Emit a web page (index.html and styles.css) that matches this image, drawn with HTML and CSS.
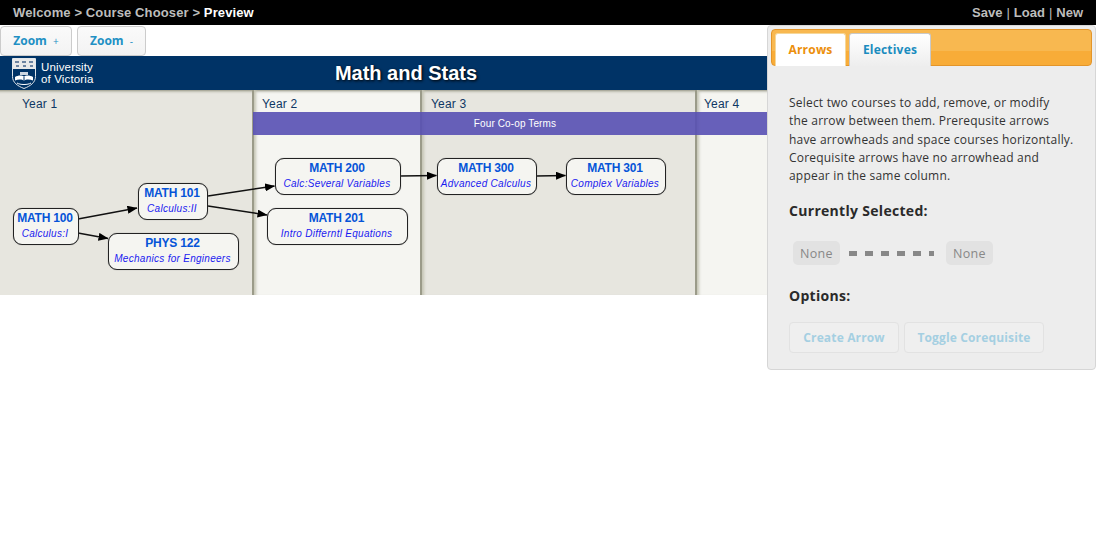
FILE: index.html
```html
<!DOCTYPE html>
<html lang="en">
<head>
<meta charset="utf-8">
<title>Course Chooser Preview</title>
<link rel="stylesheet" href="styles.css">
</head>
<body>
<nav class="topbar">
  <div class="crumbs">Welcome &gt; Course Chooser &gt; <span class="current">Preview</span></div>
  <div class="actions"><span>Save</span><i>|</i><span>Load</span><i>|</i><span>New</span></div>
</nav>
<div class="toolbar">
  <button class="zoom">Zoom <small>+</small></button>
  <button class="zoom">Zoom <small>-</small></button>
</div>
<header class="banner">
  <div class="brand">
    <svg class="crest" width="24" height="31" viewBox="0 0 24 31">
      <path d="M.5.5h23v18c0 6-5 9.500-11.500 12C5.500 28 .5 24.500.5 18.500z" fill="#003366" stroke="#dfe5ea"/>
      <path d="M1 1h22v10H1z" fill="#e8e8e8"/>
      <path d="M3 3h4v2H3zM10 3h4v2h-4zM17 3h4v2h-4zM4 7h3v2H4zM11 7h3v2h-3zM18 7h3v2h-3z" fill="#6c83a0"/>
      <path d="M3 19c3-2 7-2 9-.5 2-1.500 6-1.500 9 .5v3.500c-3-1.500-7-1.500-9 0-2-1.500-6-1.500-9 0z" fill="#fff"/>
      <path d="M12 18.500v4" stroke="#003366"/>
      <path d="M8 14h8v3H8z" fill="#cdd6e0"/>
      <path d="M5 25c3 2 11 2 14 0" stroke="#fff" fill="none"/>
    </svg>
    <div class="wordmark">University<br>of Victoria</div>
  </div>
  <h1>Math and Stats</h1>
</header>
<main class="chart">
  <section class="year y1"><span>Year 1</span></section>
  <section class="year y2"><span>Year 2</span></section>
  <section class="year y3"><span>Year 3</span></section>
  <section class="year y4"><span>Year 4</span></section>
  <div class="coop">Four Co-op Terms</div>
  <svg class="arrows" width="767" height="205" viewBox="0 90 767 205">
    <defs>
      <marker id="head" markerUnits="userSpaceOnUse" markerWidth="10" markerHeight="8" refX="9.500" refY="4" orient="auto">
        <path d="M0 0l10 4-10 4z" fill="#000"/>
      </marker>
    </defs>
    <g stroke="#111" stroke-width="1.400" marker-end="url(#head)">
      <line x1="78" y1="219" x2="137" y2="208"/>
      <line x1="78" y1="233" x2="108" y2="238.500"/>
      <line x1="208" y1="196" x2="274.500" y2="186"/>
      <line x1="208" y1="206" x2="267" y2="215"/>
      <line x1="400" y1="176" x2="436.500" y2="175.500"/>
      <line x1="536" y1="176" x2="565.500" y2="175.500"/>
    </g>
  </svg>
  <div class="course c100"><b>MATH 100</b><em>Calculus:I</em></div>
  <div class="course c101"><b>MATH 101</b><em>Calculus:II</em></div>
  <div class="course c122"><b>PHYS 122</b><em>Mechanics for Engineers</em></div>
  <div class="course c200"><b>MATH 200</b><em>Calc:Several Variables</em></div>
  <div class="course c201"><b>MATH 201</b><em>Intro Differntl Equations</em></div>
  <div class="course c300"><b>MATH 300</b><em>Advanced Calculus</em></div>
  <div class="course c301"><b>MATH 301</b><em>Complex Variables</em></div>
</main>
<aside class="panel">
  <div class="tabs">
    <div class="tab active">Arrows</div>
    <div class="tab">Electives</div>
  </div>
  <div class="panel-body">
    <p>Select two courses to add, remove, or modify<br>the arrow between them. Prerequsite arrows<br>have arrowheads and space courses horizontally.<br>Corequisite arrows have no arrowhead and<br>appear in the same column.</p>
    <h2>Currently Selected:</h2>
    <div class="selected">
      <span class="pill">None</span>
      <span class="dashes"></span>
      <span class="pill">None</span>
    </div>
    <h2 class="options">Options:</h2>
    <div class="buttons">
      <button class="ghost">Create Arrow</button>
      <button class="ghost">Toggle Corequisite</button>
    </div>
  </div>
</aside>
</body>
</html>
```
FILE: styles.css
```css
* { box-sizing: border-box; }
html, body { margin: 0; padding: 0; }
body {
  position: relative;
  height: 539px;
  overflow: hidden;
  background: #fff;
  font-family: "Liberation Sans", Arial, sans-serif;
}
.topbar {
  display: flex;
  justify-content: space-between;
  height: 25px;
  padding: 5px 13px 0;
  background: #000;
  color: #bdbdbd;
  font-size: 13px;
  font-weight: bold;
  line-height: 15px;
}
.crumbs { letter-spacing: .12px; }
.current { color: #fff; }
.actions { display: flex; }
.actions i { margin: 0 4px; font-style: normal; font-weight: normal; }
.toolbar {
  display: flex;
  gap: 5px;
  height: 31px;
  padding-top: 1px;
}
.zoom {
  width: 72px;
  height: 30px;
  padding: 0 0 2px;
  border: 1px solid #ccc;
  border-radius: 4px;
  background: linear-gradient(#fafafa, #f3f3f3);
  color: #2190c4;
  font: bold 12px "Open Sans", sans-serif;
}
.zoom + .zoom { width: 69px; }
.zoom small { margin-left: 3px; font-size: 10px; font-weight: normal; }
.banner {
  position: relative;
  display: flex;
  justify-content: center;
  align-items: center;
  height: 34px;
  padding-right: 284px;
  background: #003366;
}
.banner h1 {
  margin: 0;
  color: #fff;
  font-size: 20px;
  font-weight: bold;
  text-shadow: 1px 1px 3px #000;
}
.brand {
  position: absolute;
  left: 12px;
  top: 2px;
  display: flex;
  gap: 5px;
}
.wordmark {
  padding-top: 3px;
  color: #fff;
  font: 11.500px/12px "Liberation Sans", sans-serif;
  letter-spacing: .15px;
}
.chart {
  position: relative;
  display: flex;
  height: 205px;
}
.year {
  flex: none;
  padding-top: 7px;
  color: #0e3764;
  font-size: 12px;
  line-height: 14px;
  border-right: 2px solid #9b9b89;
  box-shadow: inset 0 4px 3px -3px #8c8c78;
}
.year span { letter-spacing: .2px; }
.y1 { width: 254px; padding-left: 22px; background: #e7e6df; }
.y2, .y3, .y4 { box-shadow: inset 4px 0 3px -2px #c4c4b4, inset 0 4px 3px -3px #8c8c78; }
.y2 { width: 168px; padding-left: 8px; background: #f5f5f1; }
.y3 { width: 275px; padding-left: 9px; background: #e7e6df; }
.y4 { flex: 1; padding-left: 7px; background: #f5f5f1; border-right: 0; }
.coop {
  position: absolute;
  left: 253px;
  width: 524px;
  top: 22px;
  height: 23px;
  background: rgba(88, 80, 180, .9);
  color: #fff;
  font-size: 10px;
  line-height: 23px;
  letter-spacing: .12px;
  text-align: center;
}
.arrows { position: absolute; left: 0; top: 0; }
.course {
  position: absolute;
  height: 37px;
  display: flex;
  flex-direction: column;
  align-items: center;
  padding: 2px 2px 0 0;
  border: 1px solid #222;
  border-radius: 9px;
  background: #f5f5f1;
  box-shadow: 0 0 1px #777;
}
.course b {
  color: #0554d8;
  font-size: 12px;
  line-height: 14px;
  letter-spacing: -.2px;
}
.course em {
  margin-top: 3px;
  color: #1a1af0;
  font-size: 10px;
  line-height: 11px;
  letter-spacing: .28px;
  white-space: nowrap;
}
.c100 { left: 13px; top: 118px; width: 66px; }
.c101 { left: 138px; top: 93px; width: 70px; }
.c122 { left: 108px; top: 143px; width: 131px; }
.c200 { left: 275px; top: 68px; width: 126px; }
.c201 { left: 267px; top: 118px; width: 141px; }
.c300 { left: 437px; top: 68px; width: 100px; }
.c301 { left: 566px; top: 68px; width: 100px; }
.panel {
  position: absolute;
  left: 767px;
  top: 25px;
  width: 329px;
  height: 345px;
  padding: 3px 3px 0;
  border: 1px solid #d6d6d6;
  border-radius: 4px;
  background: #ededed;
  font-family: "Open Sans", sans-serif;
}
.tabs {
  display: flex;
  gap: 3px;
  height: 37px;
  padding: 3px 0 0 3px;
  border: 1px solid #e3952a;
  border-radius: 4px;
  background: linear-gradient(#f8b850 60%, #f8ac38 60%);
}
.tab {
  width: 82px;
  height: 33px;
  border: 1px solid #c9c9c9;
  border-bottom: 0;
  border-radius: 3px 3px 0 0;
  background: linear-gradient(#fff, #eee);
  color: #1a8cbf;
  font-size: 12px;
  font-weight: bold;
  letter-spacing: .2px;
  line-height: 31px;
  text-align: center;
}
.tab.active {
  width: 71px;
  border-color: #f5d79a;
  background: #fff;
  color: #ec8f0c;
}
.panel-body { padding: 28px 18px 0; }
.panel-body p {
  margin: 0;
  color: #333;
  font-size: 12px;
  line-height: 18.300px;
  letter-spacing: .2px;
  white-space: nowrap;
}
.panel-body h2 {
  margin: 16px 0 0;
  color: #2a2a2a;
  font-size: 14px;
  font-weight: bold;
  line-height: 20px;
  letter-spacing: .3px;
}
.selected {
  display: flex;
  align-items: center;
  margin: 20px 0 0 4px;
}
.pill {
  width: 47px;
  height: 24px;
  border-radius: 5px;
  background: #e2e2e2;
  color: #888;
  font-size: 12.500px;
  line-height: 25px;
  letter-spacing: .3px;
  text-align: center;
}
.dashes {
  width: 85px;
  height: 5px;
  margin: 0 12px 0 9px;
  background: repeating-linear-gradient(90deg, #888 0 8px, transparent 8px 16px);
}
.panel-body h2.options { margin-top: 21px; }
.buttons {
  display: flex;
  gap: 5px;
  margin-top: 16px;
}
.ghost {
  height: 31px;
  padding: 0;
  border: 1px solid #e2e2e2;
  border-radius: 4px;
  background: #efefef;
  color: #a5cfe2;
  font: bold 12px "Open Sans", sans-serif;
  letter-spacing: .15px;
  width: 110px;
}
.ghost + .ghost { width: 140px; }
```
